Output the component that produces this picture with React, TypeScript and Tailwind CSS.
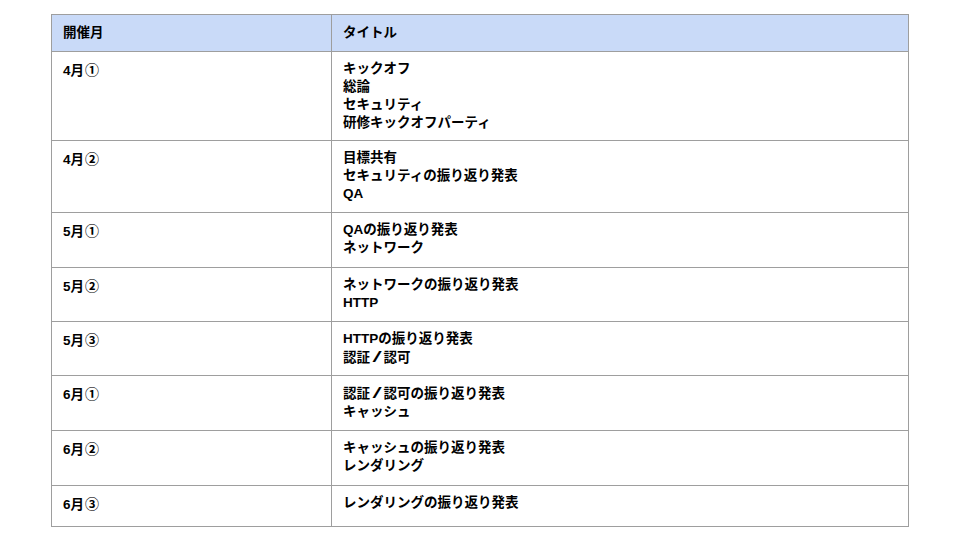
import React from "react";

const rows: { m: string; c: string; t: string[]; h: string }[] = [
  { m: "4月", c: "①", t: ["キックオフ", "総論", "セキュリティ", "研修キックオフパーティ"], h: "h-[89px]" },
  { m: "4月", c: "②", t: ["目標共有", "セキュリティの振り返り発表", "QA"], h: "h-[72px]" },
  { m: "5月", c: "①", t: ["QAの振り返り発表", "ネットワーク"], h: "h-[55px]" },
  { m: "5月", c: "②", t: ["ネットワークの振り返り発表", "HTTP"], h: "h-[54px]" },
  { m: "5月", c: "③", t: ["HTTPの振り返り発表", "認証/認可"], h: "h-[54px]" },
  { m: "6月", c: "①", t: ["認証/認可の振り返り発表", "キャッシュ"], h: "h-[55px]" },
  { m: "6月", c: "②", t: ["キャッシュの振り返り発表", "レンダリング"], h: "h-[55px]" },
  { m: "6月", c: "③", t: ["レンダリングの振り返り発表"], h: "h-[40px]" },
];

function Line({ text }: { text: string }) {
  const parts = text.split("/");
  return (
    <div>
      {parts.map((p, i) => (
        <React.Fragment key={i}>
          {i > 0 && (
            <span className="inline-block w-[13.5px] text-center">
              <span className="inline-block scale-x-[2.2] text-[15px] leading-[18px] font-normal">/</span>
            </span>
          )}
          {p}
        </React.Fragment>
      ))}
    </div>
  );
}

export default function App() {
  return (
    <div
      className="w-[960px] h-[540px] bg-white pt-[14px] pl-[51px]"
      style={{ fontFamily: '"Liberation Sans", "Noto Sans CJK JP", sans-serif' }}
    >
      <div className="w-[858px] border border-[#9e9e9e] text-[13.5px] leading-[18px] font-bold text-black">
        <div className="flex bg-[#c9daf8] h-[37px] border-b border-[#9e9e9e]">
          <div className="w-[280px] border-r border-[#9e9e9e] pl-[11px] pt-[9px]">開催月</div>
          <div className="flex-1 pl-[11px] pt-[9px]">タイトル</div>
        </div>
        {rows.map((r, i) => (
          <div
            key={i}
            className={`flex ${r.h} ${i < rows.length - 1 ? "border-b border-[#9e9e9e]" : ""}`}
          >
            <div className="w-[280px] border-r border-[#9e9e9e] pl-[11px] pt-[8px]">
              {r.m}
              <span
                style={{ fontFamily: '"Noto Sans CJK JP", sans-serif' }}
                className="font-bold text-[14px] ml-[1px]"
              >
                {r.c}
              </span>
            </div>
            <div className="flex-1 pl-[11px] pt-[8px]">
              {r.t.map((l, j) => (
                <Line key={j} text={l} />
              ))}
            </div>
          </div>
        ))}
      </div>
    </div>
  );
}
